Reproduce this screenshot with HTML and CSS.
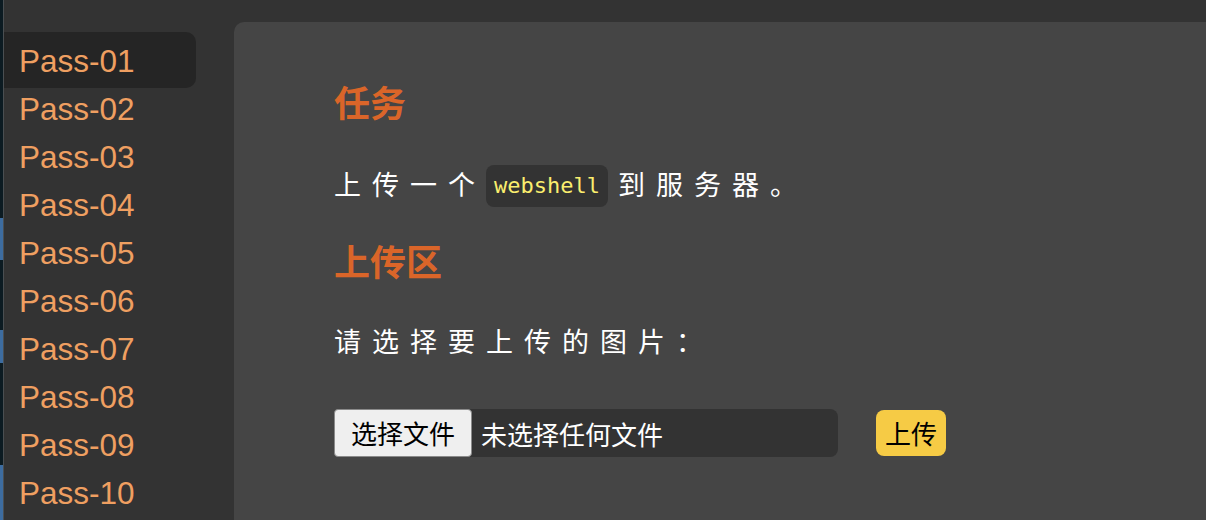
FILE: index.html
```html
<!DOCTYPE html>
<html>
<head>
 <meta charset="UTF-8">
 <title>upload-labs</title>
 <link rel="stylesheet" href="styles.css">
</head>
<body>
<div class="page">
  <div class="edge"></div>
  <ul class="menu">
    <li class="item active">Pass-01</li>
    <li class="item">Pass-02</li>
    <li class="item">Pass-03</li>
    <li class="item">Pass-04</li>
    <li class="item">Pass-05</li>
    <li class="item">Pass-06</li>
    <li class="item">Pass-07</li>
    <li class="item">Pass-08</li>
    <li class="item">Pass-09</li>
    <li class="item">Pass-10</li>
  </ul>
  <div class="panel">
    <h2 class="title first">任务</h2>
    <p class="text">上传一个<code class="code">webshell</code>到服务器。</p>
    <h2 class="title">上传区</h2>
    <p class="text">请选择要上传的图片：</p>
    <div class="upload">
      <div class="file">
        <span class="file-btn">选择文件</span>
        <span class="file-name">未选择任何文件</span>
      </div>
      <span class="submit">上传</span>
    </div>
  </div>
</div>
</body>
</html>
```

FILE: styles.css
```css
html, body {
  margin: 0;
  height: 100%;
  background: #333333;
  overflow: hidden;
}
.page {
  display: flex;
  height: 100%;
}
.edge {
  width: 3px;
  flex: none;
  border-right: 1px solid #4a4f52;
  background: linear-gradient(to bottom,
    #0c1b22 0, #0c1b22 218px,
    #3d6c9f 218px, #3d6c9f 260px,
    #0c1b22 260px, #0c1b22 330px,
    #3d6c9f 330px, #3d6c9f 363px,
    #0c1b22 363px, #0c1b22 465px,
    #3d6c9f 465px, #3d6c9f 520px);
}
.menu {
  list-style: none;
  margin: 0 38px 0 0;
  padding: 32px 0 0 0;
  width: 192px;
  flex: none;
}
.item {
  font-family: "Liberation Sans", Arial, sans-serif;
  font-size: 31.5px;
  line-height: 48px;
  color: #ef9f61;
  padding: 0 15px;
}
.active {
  background: #252525;
  border-radius: 0 10px 10px 0;
  padding: 5px 15px 3px 15px;
  margin-bottom: -3px;
}
.panel {
  flex: 1;
  margin-top: 22px;
  background: #454545;
  border-radius: 10px 0 0 0;
  padding: 57px 0 0 100px;
  font-family: "Noto Sans CJK SC", sans-serif;
}
.title {
  margin: 33px 0 0 0;
  font-size: 36px;
  line-height: 44px;
  font-weight: bold;
  color: #da6529;
}
.first {
  margin-top: 0;
}
.text {
  margin: 38px 0 0 0;
  font-size: 27px;
  line-height: 42px;
  letter-spacing: 11px;
  color: #ffffff;
}
.first + .text {
  margin-top: 40px;
}
.code {
  display: inline-block;
  font-family: "DejaVu Sans Mono", monospace;
  font-size: 22px;
  line-height: 42px;
  letter-spacing: 0;
  padding: 0 8px;
  margin-right: 10px;
  background: #333333;
  color: #faee6e;
  border-radius: 8px;
  vertical-align: top;
  position: relative;
  top: 2px;
}
.upload {
  display: flex;
  align-items: center;
  margin-top: 47px;
}
.file {
  display: flex;
  align-items: center;
  width: 504px;
  height: 48px;
  background: #333333;
  border-radius: 8px;
  font-size: 26px;
}
.file-btn {
  box-sizing: border-box;
  width: 138px;
  height: 48px;
  line-height: 46px;
  text-align: center;
  background: #efefef;
  border: 1px solid #8a8a8a;
  border-radius: 4px;
  color: #000000;
}
.file-name {
  margin-left: 9px;
  color: #ffffff;
}
.submit {
  margin-left: 38px;
  width: 70px;
  height: 46px;
  line-height: 46px;
  text-align: center;
  font-size: 26px;
  background: #f6cb45;
  border-radius: 8px;
  color: #000000;
}
```
